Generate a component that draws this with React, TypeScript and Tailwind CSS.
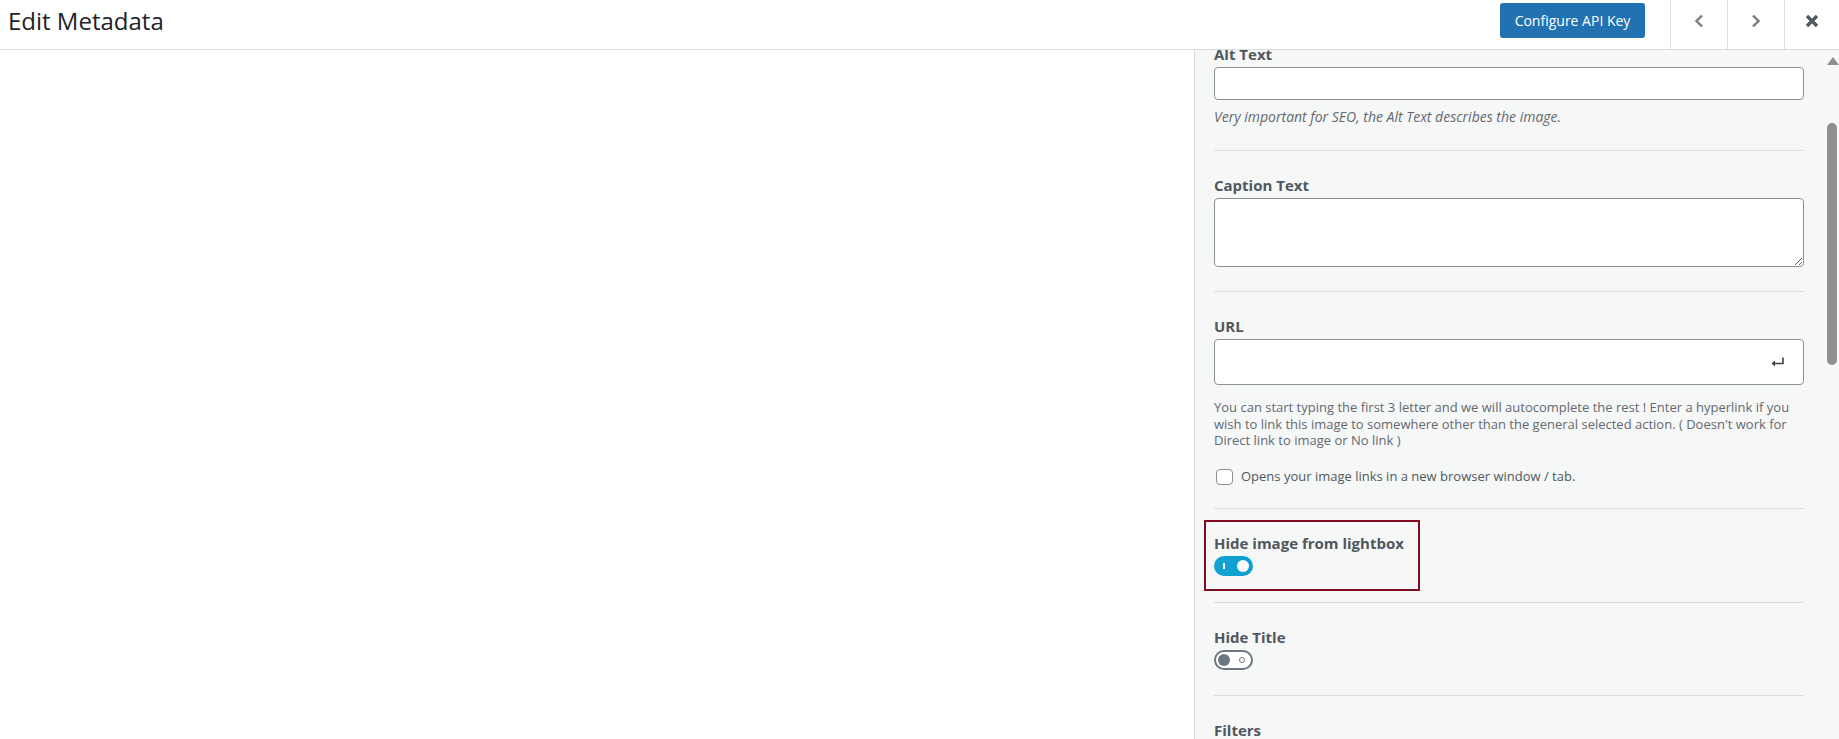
import React from 'react';

const font = { fontFamily: '"Open Sans", "Noto Sans", sans-serif' };

function Toggle({ on }: { on: boolean }) {
  if (on) {
    return (
      <div className="relative w-[39px] h-[20px] rounded-[10px] bg-[#11a0d2]">
        <span className="absolute left-[9px] top-[7px] w-[2px] h-[6px] bg-white" />
        <span className="absolute left-[23px] top-[4px] w-[12px] h-[12px] rounded-full bg-white" />
      </div>
    );
  }
  return (
    <div className="relative w-[39px] h-[20px] rounded-[10px] border-2 border-[#6c7781] bg-white">
      <span className="absolute left-[2px] top-[2px] w-[12px] h-[12px] rounded-full bg-[#6c7781]" />
      <span className="absolute right-[6px] top-[5px] w-[6px] h-[6px] rounded-full border-[1.5px] border-[#6c7781]" />
    </div>
  );
}

function Section({ label, children, first, className = '' }: { label: string; children?: React.ReactNode; first?: boolean; className?: string }) {
  return (
    <div className={`relative ${first ? '' : 'border-t border-[#dcdcde] pt-[25px]'} ${className}`}>
      <div className="text-[15px] leading-[18px] font-bold text-[#50575e] mb-[4px]">{label}</div>
      {children}
    </div>
  );
}

export default function App() {
  return (
    <div className="w-full h-[739px] flex flex-col bg-white overflow-hidden" style={font}>
      {/* Header */}
      <div className="h-[50px] shrink-0 flex border-b border-[#dcdcde]">
        <div className="flex-1 flex items-center pl-[8px] pb-[8px]">
          <h1 className="text-[24px] text-[#1d2327] font-medium leading-none">Edit Metadata</h1>
        </div>
        <div className="flex items-start pt-[3px] mr-[25px]">
          <button className="h-[35px] w-[145px] rounded-[3px] bg-[#2271b1] text-white text-[14px]">
            Configure API Key
          </button>
        </div>
        <div className="w-[57px] border-l border-[#dcdcde] flex items-center justify-center pb-[8px]">
          <svg width="10" height="14" viewBox="0 0 10 14">
            <polyline points="8,1.5 2.5,7 8,12.5" fill="none" stroke="#787c82" strokeWidth="2.4" />
          </svg>
        </div>
        <div className="w-[57px] border-l border-[#dcdcde] flex items-center justify-center pb-[8px]">
          <svg width="10" height="14" viewBox="0 0 10 14">
            <polyline points="2,1.5 7.5,7 2,12.5" fill="none" stroke="#787c82" strokeWidth="2.4" />
          </svg>
        </div>
        <div className="w-[55px] border-l border-[#dcdcde] flex items-center justify-center pb-[8px]">
          <svg width="14" height="14" viewBox="0 0 14 14">
            <path d="M2 2 L12 12 M12 2 L2 12" stroke="#50575e" strokeWidth="3.2" />
          </svg>
        </div>
      </div>

      {/* Body */}
      <div className="flex-1 flex min-h-0">
        <div className="flex-1 bg-white" />
        <div className="w-[629px] border-l border-[#dcdcde] bg-[#f6f7f7] overflow-hidden">
          <div className="px-[19px]">
            <Section label="Alt Text" first className="-mt-[5px] pb-[24px]">
              <input className="block w-full h-[33px] rounded-[4px] border border-[#8c8f94] bg-white" />
              <p className="mt-[8px] text-[14px] leading-[18px] italic text-[#646970]">
                Very important for SEO, the Alt Text describes the image.
              </p>
            </Section>

            <Section label="Caption Text" className="pb-[24px]">
              <textarea className="block w-full h-[69px] rounded-[4px] border border-[#8c8f94] bg-white" />
            </Section>

            <Section label="URL" className="pb-[23px]">
              <div className="relative h-[46px] rounded-[4px] border border-[#8c8f94] bg-white">
                <svg className="absolute right-[18px] top-[17px]" width="14" height="10" viewBox="0 0 14 10">
                  <path d="M12 0.5 V6.5 H3" fill="none" stroke="#3c434a" strokeWidth="1.6" />
                  <polygon points="0.5,6.5 4,3.5 4,9.5" fill="#3c434a" />
                </svg>
              </div>
              <p className="mt-[14px] text-[13px] leading-[16.5px] text-[#646970]">
                You can start typing the first 3 letter and we will autocomplete the rest ! Enter a hyperlink if you wish to link this image to somewhere other than the general selected action. ( Doesn't work for Direct link to image or No link )
              </p>
              <label className="mt-[20px] flex items-center h-[16px]">
                <span className="ml-[2px] w-[17px] h-[16px] rounded-[4px] border border-[#8c8f94] bg-white" />
                <span className="ml-[8px] text-[13px] text-[#50575e]">Opens your image links in a new browser window / tab.</span>
              </label>
            </Section>

            <Section label="Hide image from lightbox" className="pb-[26px]">
              <div className="mt-[2px]">
                <Toggle on />
              </div>
              <div className="absolute top-[11px] -left-[10px] w-[216px] h-[71px] border-2 border-[#7f0b1f]" />
            </Section>

            <Section label="Hide Title" className="pb-[25px]">
              <div className="mt-[2px]">
                <Toggle on={false} />
              </div>
            </Section>

            <Section label="Filters" className="pb-[24px]" />
          </div>
        </div>
        {/* Scrollbar */}
        <div className="w-[16px] bg-[#f8f8f8] flex flex-col">
          <div className="mt-[7px] ml-[4px] w-0 h-0 border-l-[6px] border-r-[6px] border-b-[8px] border-l-transparent border-r-transparent border-b-[#8f8f8f]" />
          <div className="mt-[58px] ml-[4px] w-[10px] h-[242px] rounded-full bg-[#8f8f8f]" />
        </div>
      </div>
    </div>
  );
}
